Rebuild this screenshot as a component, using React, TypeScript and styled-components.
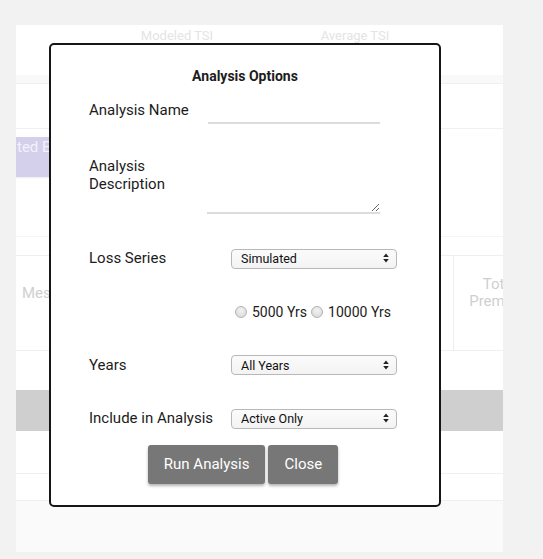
import styled, { createGlobalStyle } from 'styled-components';

const GlobalStyle = createGlobalStyle`
  html, body {
    margin: 0;
    padding: 0;
    background: #f2f2f2;
    font-family: Roboto, "Liberation Sans", sans-serif;
  }
`;

const Page = styled.div`
  position: relative;
  width: 543px;
  height: 559px;
  overflow: hidden;
`;

/* ---------- background table ---------- */

const Panel = styled.div`
  width: 487px;
  height: 527px;
  margin: 25px 0 0 16px;
  background: #fff;
  display: flex;
  flex-direction: column;
  overflow: hidden;
`;

const Row = styled.div<{ $h?: number; $bg?: string; $line?: string }>`
  box-sizing: border-box;
  flex: ${({ $h }) => ($h ? `0 0 ${$h}px` : '1 1 auto')};
  background: ${({ $bg }) => $bg || '#fff'};
  border-bottom: ${({ $line }) => ($line ? `1px solid ${$line}` : 'none')};
`;

const HeaderRow = styled(Row)`
  display: grid;
  grid-template-columns: 72px 178px 178px 59px;
  padding-top: 3px;
  font-size: 13px;
  line-height: 15px;
  color: #e4e4e4;
`;

const HeaderCell = styled.div`
  text-align: center;
`;

const Chip = styled.div`
  width: 160px;
  height: 40px;
  margin-top: 8px;
  background: #d4d0ec;
  color: #f3f2fb;
  font-size: 15px;
  line-height: 20px;
  padding-left: 1px;
  box-shadow: 0 1px 2px rgba(0, 0, 0, 0.08);
`;

const DataRow = styled(Row)`
  display: grid;
  grid-template-columns: 437px 92px;
  font-size: 15px;
  line-height: 17px;
  color: #cfcfcf;
`;

const DataCell = styled.div<{ $center?: boolean }>`
  display: flex;
  align-items: center;
  justify-content: ${({ $center }) => ($center ? 'center' : 'flex-start')};
  text-align: center;
  padding: 0 0 20px ${({ $center }) => ($center ? 0 : 6)}px;
  border-left: ${({ $center }) => ($center ? '1px solid #eeeeee' : 'none')};
`;

/* ---------- modal ---------- */

const Modal = styled.div`
  position: absolute;
  left: 49px;
  top: 43px;
  width: 392px;
  height: 464px;
  box-sizing: border-box;
  border: 2px solid #161616;
  border-radius: 5px;
  background: #fff;
  padding: 22px 0 0 38px;
  color: #1c1c1c;
`;

const Title = styled.div`
  margin-left: -38px;
  text-align: center;
  font-weight: 700;
  font-size: 14px;
  line-height: 18px;
`;

const Field = styled.div<{ $top: number }>`
  display: grid;
  grid-template-columns: 118px 1fr;
  align-items: start;
  margin-top: ${({ $top }) => $top}px;
`;

const Label = styled.div<{ $lh?: number }>`
  font-size: 15px;
  line-height: ${({ $lh }) => $lh || 20}px;
  white-space: nowrap;
`;

const TextInput = styled.input`
  box-sizing: border-box;
  width: 172px;
  height: 24px;
  margin-left: 1px;
  border: none;
  border-bottom: 2px solid #dcdcdc;
  outline: none;
  background: transparent;
`;

const TextArea = styled.textarea`
  box-sizing: border-box;
  width: 173px;
  height: 57px;
  border: none;
  border-bottom: 2px solid #dcdcdc;
  outline: none;
  background: transparent;
  resize: both;
`;

const SelectWrap = styled.div`
  position: relative;
  width: 166px;
  margin-left: 24px;
`;

const Select = styled.select`
  appearance: none;
  box-sizing: border-box;
  width: 100%;
  height: 20px;
  padding: 0 0 0 9px;
  border: 1px solid #b8b8b8;
  border-radius: 4px;
  background: linear-gradient(#fbfbfb, #f3f3f3);
  font-family: Roboto, "Liberation Sans", sans-serif;
  font-size: 12.5px;
  color: #111;
  outline: none;
`;

const Arrows = styled.svg`
  position: absolute;
  right: 8px;
  top: 5px;
  pointer-events: none;
`;

const RadioGroup = styled.div`
  grid-column: 2;
  display: flex;
  align-items: center;
  margin-left: 28px;
  font-size: 14px;
  line-height: 18px;
`;

const Radio = styled.input`
  appearance: none;
  width: 12px;
  height: 12px;
  margin: 0 5px 0 0;
  border: 1px solid #b3b3b3;
  border-radius: 50%;
  background: radial-gradient(circle at 50% 35%, #f2f2f2, #d6d6d6);
  box-sizing: border-box;
`;

const RadioText = styled.span`
  margin-right: 4px;
`;

const Buttons = styled.div`
  display: flex;
  justify-content: center;
  gap: 3px;
  margin: 16px 0 0 -42px;
`;

const Button = styled.button`
  height: 39px;
  padding: 0 16px;
  border: none;
  border-radius: 3px;
  background: #777;
  color: #fff;
  font-family: Roboto, "Liberation Sans", sans-serif;
  font-size: 15px;
  box-shadow: 0 2px 3px rgba(0, 0, 0, 0.3);
`;

const SelectBox = ({ value }: { value: string }) => (
  <SelectWrap>
    <Select defaultValue={value}>
      <option>{value}</option>
    </Select>
    <Arrows width="6" height="10" viewBox="0 0 6 10">
      <path d="M3 0.5 L5.8 4 L0.2 4 Z M3 9.5 L5.8 6 L0.2 6 Z" fill="#222" />
    </Arrows>
  </SelectWrap>
);

const App = () => {
  return (
    <Page>
      <GlobalStyle />
      <Panel>
        <HeaderRow $h={50}>
          <span />
          <HeaderCell>Modeled TSI</HeaderCell>
          <HeaderCell>Average TSI</HeaderCell>
          <span />
        </HeaderRow>
        <Row $h={9} $bg="#f9f9f9" $line="#efefef" />
        <Row $h={45} $line="#f0f0f0" />
        <Row $h={108} $line="#f5f5f5">
          <Chip>ted E</Chip>
        </Row>
        <Row $h={19} $line="#efefef" />
        <DataRow $h={95} $line="#efefef">
          <DataCell>Mes</DataCell>
          <DataCell $center>
            Total
            <br />
            Premium
          </DataCell>
        </DataRow>
        <Row $h={39} />
        <Row $h={41} $bg="#cfcfcf" />
        <Row $h={43} $line="#efefef" />
        <Row $h={27} $line="#efefef" />
        <Row $bg="#fafafa" />
      </Panel>

      <Modal>
        <Title>Analysis Options</Title>
        <Field $top={15}>
          <Label>Analysis Name</Label>
          <TextInput />
        </Field>
        <Field $top={33}>
          <Label $lh={18}>
            Analysis
            <br />
            Description
          </Label>
          <TextArea />
        </Field>
        <Field $top={34}>
          <Label>Loss Series</Label>
          <SelectBox value="Simulated" />
        </Field>
        <Field $top={34}>
          <RadioGroup>
            <Radio type="radio" name="yrs" />
            <RadioText>5000 Yrs</RadioText>
            <Radio type="radio" name="yrs" />
            <RadioText>10000 Yrs</RadioText>
          </RadioGroup>
        </Field>
        <Field $top={34}>
          <Label>Years</Label>
          <SelectBox value="All Years" />
        </Field>
        <Field $top={33}>
          <Label>Include in Analysis</Label>
          <SelectBox value="Active Only" />
        </Field>
        <Buttons>
          <Button>Run Analysis</Button>
          <Button>Close</Button>
        </Buttons>
      </Modal>
    </Page>
  );
};

export default App;
